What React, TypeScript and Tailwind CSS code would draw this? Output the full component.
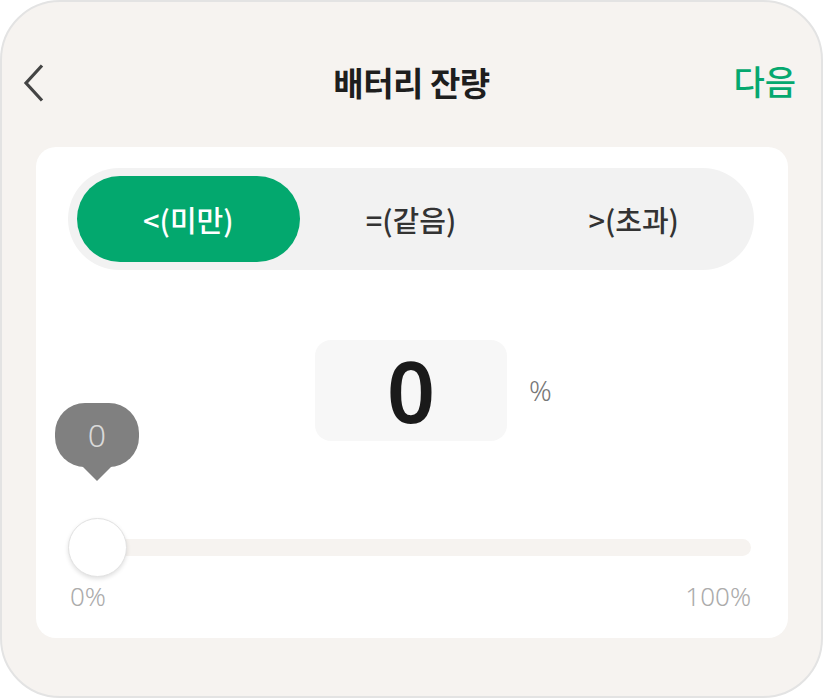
import React from "react";

const font = { fontFamily: '"Noto Sans CJK KR", "Noto Sans", sans-serif' };

export default function App() {
  return (
    <div className="w-[823px] h-[698px] bg-white" style={font}>
      <div className="w-[823px] h-[698px] rounded-[60px] border-2 border-[#e3e3e3] bg-[#f6f3f0] px-[34px] pt-[48px] box-border">
        {/* Header */}
        <div className="relative h-[64px] flex items-center justify-center">
          <svg
            className="absolute left-[-14px] top-[14px]"
            width="24"
            height="38"
            viewBox="0 0 24 38"
            fill="none"
          >
            <path d="M20 1.5 L4 19 L20 36.5" stroke="#444" strokeWidth="3.2" strokeLinecap="butt" strokeLinejoin="miter" />
          </svg>
          <div className="text-[33px] font-bold text-[#1e1e1e] leading-none tracking-[-0.5px]">배터리 잔량</div>
          <div className="absolute right-[-9px] top-[14px] text-[34px] font-medium text-[#05a86f] leading-none">다음</div>
        </div>

        {/* Card */}
        <div className="relative mt-[33px] w-[752px] h-[491px] bg-white rounded-[20px] pl-[32px] pr-[34px] pt-[21px] box-border">
          {/* Segmented control */}
          <div className="h-[102px] w-[686px] rounded-full bg-[#f2f2f2] px-[9px] py-[8px] grid grid-cols-3 box-border">
            <div className="rounded-full bg-[#03a86e] flex items-center justify-center text-white text-[29px] font-medium leading-none">
              &lt;(미만)
            </div>
            <div className="flex items-center justify-center text-[#333] text-[29px] font-medium leading-none">
              =(같음)
            </div>
            <div className="flex items-center justify-center text-[#333] text-[29px] font-medium leading-none">
              &gt;(초과)
            </div>
          </div>

          {/* Value */}
          <div className="mt-[70px] flex justify-center">
            <div className="relative">
              <div className="w-[192px] h-[101px] rounded-[16px] bg-[#f7f7f7] flex items-center justify-center">
                <span className="text-[84px] font-semibold text-[#1a1a1a] leading-none" style={{ fontFamily: '"Noto Sans", sans-serif' }}>0</span>
              </div>
              <span className="absolute left-full ml-[22px] top-[36px] text-[28px] font-light text-[#777] leading-none" style={{ fontFamily: '"Noto Sans", sans-serif' }}>%</span>
            </div>
          </div>

          {/* Tooltip */}
          <div className="absolute left-[19px] top-[256px] flex flex-col items-center">
            <div className="w-[84px] h-[64px] rounded-[30px] bg-[#808080] flex items-center justify-center">
              <span className="text-[32px] font-light text-[#d9d9d9] leading-none" style={{ fontFamily: '"Noto Sans", sans-serif' }}>0</span>
            </div>
            <div className="w-0 h-0 -mt-[1px] border-l-[15px] border-r-[15px] border-t-[15px] border-l-transparent border-r-transparent border-t-[#808080]" />
          </div>

          {/* Slider */}
          <div className="mt-[77px] mr-[3px]">
            <div className="relative h-[59px] flex items-center">
              <div className="w-full h-[17px] rounded-full bg-[#f6f3f0]" />
              <div className="absolute left-0 top-0 w-[59px] h-[59px] rounded-full bg-white border border-[#e2e2e2] shadow-[0_2px_4px_rgba(0,0,0,0.12)]" />
            </div>
            <div className="mt-[6px] flex justify-between text-[26px] font-light text-[#ababab] leading-none" style={{ fontFamily: '"Noto Sans", sans-serif' }}>
              <span className="ml-[2px]">0%</span>
              <span>100%</span>
            </div>
          </div>
        </div>
      </div>
    </div>
  );
}
